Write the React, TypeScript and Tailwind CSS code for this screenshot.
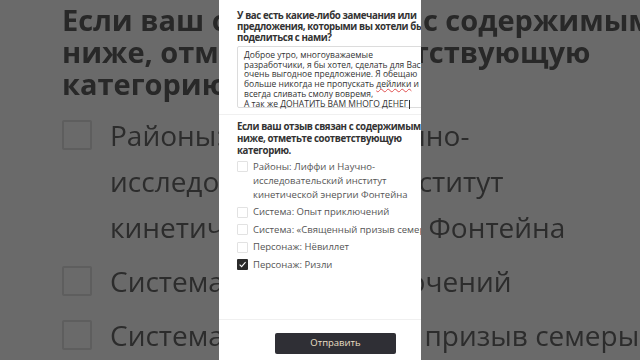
import React from "react";

const font = { fontFamily: '"Open Sans", "Noto Sans", sans-serif' };

function BgCheck() {
  return <div className="w-[30px] h-[30px] shrink-0 border-2 border-[#5e5e5e] rounded-[2px] mt-[8px]" />;
}

function Check({ checked }: { checked?: boolean }) {
  return checked ? (
    <div className="w-[11px] h-[11px] shrink-0 mt-[1.5px] bg-[#2b2b2b] rounded-[1px] flex items-center justify-center">
      <svg width="9" height="9" viewBox="0 0 10 10">
        <path d="M1.8 5.2 L4 7.4 L8.4 2.4" fill="none" stroke="#fff" strokeWidth="1.2" />
      </svg>
    </div>
  ) : (
    <div className="w-[11px] h-[11px] shrink-0 mt-[1.5px] border border-[#e2e2e2] rounded-[1px]" />
  );
}

function Option({ label, checked, nowrap }: { label: string; checked?: boolean; nowrap?: boolean }) {
  return (
    <div className="flex gap-[5px] items-start">
      <Check checked={checked} />
      <div
        className={
          nowrap
            ? "text-[9.5px] leading-[14px] text-[#555] whitespace-nowrap"
            : "text-[9.5px] leading-[14px] text-[#555] w-[185px]"
        }
      >
        {label}
      </div>
    </div>
  );
}

export default function App() {
  return (
    <div className="relative w-[640px] h-[360px] overflow-hidden bg-[#6a6a6a] flex justify-center" style={font}>
      {/* blurred zoomed background */}
      <div className="absolute inset-0 pl-[62px] pt-[4px] blur-[0.7px] text-[#2c2c2c]">
        <div className="w-[600px] text-[29px] leading-[32px] font-bold text-[#282828]">
          Если ваш отзыв связан с содержимым ниже, отметьте соответствующую категорию.
        </div>
        <div className="mt-[12px] flex flex-col gap-[8px]">
          <div className="flex gap-[18px] items-start">
            <BgCheck />
            <div className="text-[28px] leading-[46px] w-[470px]">
              Районы: Лиффи и Научно-исследовательский институт кинетической энергии Фонтейна
            </div>
          </div>
          <div className="flex gap-[18px] items-start">
            <BgCheck />
            <div className="text-[28px] leading-[46px] whitespace-nowrap">Система: Опыт приключений</div>
          </div>
          <div className="flex gap-[18px] items-start">
            <BgCheck />
            <div className="text-[28px] leading-[46px] whitespace-nowrap">Система: «Священный призыв семерых»</div>
          </div>
        </div>
      </div>

      {/* panel */}
      <div className="relative z-10 w-[202px] h-full bg-white overflow-hidden">
        <div className="w-[233px] h-full flex flex-col pl-[18px] pt-[10px]">
          <div className="text-[9.7px] tracking-[-0.4px] leading-[11px] font-bold text-[#333] w-[215px]">
            У вас есть какие-либо замечания или предложения, которыми вы хотели бы поделиться с нами?
          </div>
          <div className="mt-[3px] h-[62px] w-[190px] border border-[#dcdcdc] rounded-[2px] pl-[6px] pt-[3px]">
            <div className="w-[178px] text-[8.5px] leading-[9.7px] text-[#333]">
              Доброе утро, многоуважаемые разработчики, я бы хотел, сделать для Вас очень выгодное предложение. Я обещаю больше никогда не пропускать{" "}
              <span className="underline decoration-[#e05050] decoration-wavy decoration-[0.7px] underline-offset-[1px]">дейлики</span> и всегда сливать смолу вовремя,
              <br />
              А так же ДОНАТИТЬ ВАМ МНОГО ДЕНЕГ
              <span className="inline-block w-px h-[9px] bg-[#333] align-middle ml-px" />
            </div>
          </div>
          <div className="-ml-[18px] mt-[6px] w-[233px] h-px bg-[#f0f0f0]" />
          <div className="mt-[6px] text-[9.7px] tracking-[-0.4px] leading-[12px] font-bold text-[#333] w-[200px]">
            Если ваш отзыв связан с содержимым ниже, отметьте соответствующую категорию.
          </div>
          <div className="mt-[2.5px] flex flex-col gap-[3.5px]">
            <Option label="Районы: Лиффи и Научно-исследовательский институт кинетической энергии Фонтейна" />
            <Option label="Система: Опыт приключений" nowrap />
            <Option label="Система: «Священный призыв семерых»" nowrap />
            <Option label="Персонаж: Нёвиллет" />
            <Option label="Персонаж: Ризли" checked />
          </div>
          <div className="-ml-[18px] mt-auto w-[233px] h-px bg-[#f0f0f0]" />
          <div className="-ml-[18px] w-[233px] flex justify-center pt-[13px] pb-[6px]">
            <div className="w-[121px] h-[21px] bg-[#2f2f35] rounded-[2px] flex items-center justify-center text-[9.5px] text-[#eadfc4]">
              Отправить
            </div>
          </div>
        </div>
      </div>
    </div>
  );
}
